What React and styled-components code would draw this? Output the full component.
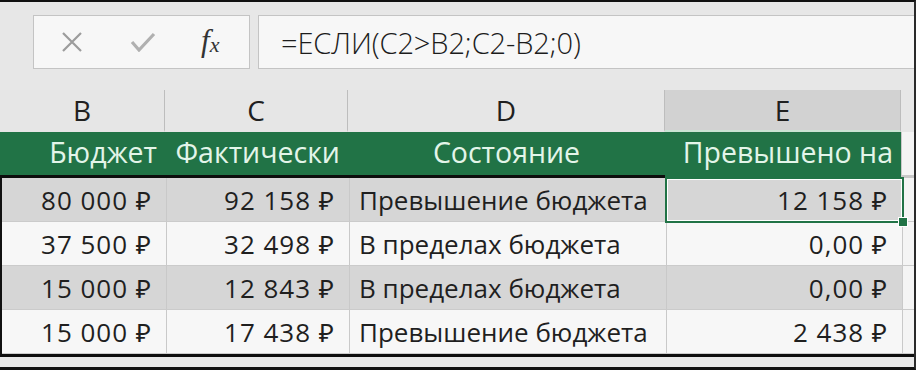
import React from "react";
import styled, { createGlobalStyle } from "styled-components";

const GlobalStyle = createGlobalStyle`
  html, body {
    margin: 0;
    padding: 0;
    background: #e7e7e7;
  }
  body {
    font-family: "Open Sans", "Noto Sans", sans-serif;
  }
`;

const columns = "165px 183px 317px 236px 1fr";

const rows = [
  { budget: "80 000 ₽", fact: "92 158 ₽", state: "Превышение бюджета", over: "12 158 ₽", shaded: true, selected: true },
  { budget: "37 500 ₽", fact: "32 498 ₽", state: "В пределах бюджета", over: "0,00 ₽" },
  { budget: "15 000 ₽", fact: "12 843 ₽", state: "В пределах бюджета", over: "0,00 ₽", shaded: true },
  { budget: "15 000 ₽", fact: "17 438 ₽", state: "Превышение бюджета", over: "2 438 ₽" },
];

const App = () => {
  return (
    <>
      <GlobalStyle />
      <Frame>
        <FormulaBar>
          <ActionBox>
            <IconSlot $left={27}>
              <svg width="22" height="20" viewBox="0 0 22 20">
                <path d="M2 1 L20 19 M20 1 L2 19" stroke="#9c9c9c" strokeWidth="2.2" fill="none" />
              </svg>
            </IconSlot>
            <IconSlot $left={47}>
              <svg width="26" height="20" viewBox="0 0 26 20">
                <path d="M2 10 L9 18 L24 2" stroke="#b0b0b0" strokeWidth="3.2" fill="none" />
              </svg>
            </IconSlot>
            <FxLabel>
              f<sub>x</sub>
            </FxLabel>
          </ActionBox>
          <FormulaInput>=ЕСЛИ(C2&gt;B2;C2-B2;0)</FormulaInput>
        </FormulaBar>

        <Sheet>
          <HeaderRow>
            <ColLetter>B</ColLetter>
            <ColLetter>C</ColLetter>
            <ColLetter>D</ColLetter>
            <ColLetter $active>E</ColLetter>
            <ColLetter $edge />
          </HeaderRow>

          <TitleRow>
            <TitleCell $align="right">Бюджет</TitleCell>
            <TitleCell $align="right">Фактически</TitleCell>
            <TitleCell $align="center">Состояние</TitleCell>
            <TitleCell $align="right" $open>
              Превышено на
            </TitleCell>
            <TitleCell $edge />
          </TitleRow>

          {rows.map((r, i) => (
            <DataRow key={i} $shaded={r.shaded} $last={i === rows.length - 1}>
              <Cell $align="right">{r.budget}</Cell>
              <Cell $align="right">{r.fact}</Cell>
              <Cell $align="left">{r.state}</Cell>
              <Cell $align="right" $selected={r.selected}>
                {r.over}
                {r.selected && (
                  <>
                    <Selection />
                    <Handle />
                  </>
                )}
              </Cell>
              <Cell $edge />
            </DataRow>
          ))}

          <TailRow>
            <TailCell />
            <TailCell />
            <TailCell />
            <TailCell />
            <TailCell $edge />
          </TailRow>
        </Sheet>
      </Frame>
    </>
  );
};

const Frame = styled.div`
  width: 916px;
  height: 370px;
  box-sizing: border-box;
  border-top: 2px solid #111;
  border-right: 2px solid #2a2a2a;
  border-bottom: 3px solid #111;
  background: #e7e7e7;
  overflow: hidden;
  display: flex;
  flex-direction: column;
`;

const FormulaBar = styled.div`
  display: flex;
  gap: 8px;
  padding: 13px 0 0 33px;
  height: 54px;
  margin-bottom: 21px;
`;

const ActionBox = styled.div`
  width: 217px;
  box-sizing: border-box;
  border: 1px solid #c4c4c4;
  background: #f7f7f7;
  display: flex;
  align-items: center;
`;

const IconSlot = styled.span`
  display: flex;
  margin-left: ${(p) => p.$left}px;
`;

const FxLabel = styled.span`
  margin-left: 45px;
  font-family: "Liberation Serif", "DejaVu Serif", serif;
  font-style: italic;
  font-size: 31px;
  color: #333333;
  line-height: 1;
  margin-top: -4px;
  sub {
    font-size: 22px;
    vertical-align: -1px;
    margin-left: 0;
  }
`;

const FormulaInput = styled.div`
  flex: 1;
  box-sizing: border-box;
  border: 1px solid #c4c4c4;
  border-right: none;
  background: #f7f7f7;
  display: flex;
  align-items: center;
  padding-left: 22px;
  font-size: 29px;
  font-weight: 300;
  letter-spacing: -0.1px;
  color: #1c1c1c;
`;

const Sheet = styled.div`
  display: flex;
  flex-direction: column;
`;

const GridRow = styled.div`
  display: grid;
  grid-template-columns: ${columns};
`;

const HeaderRow = styled(GridRow)`
  height: 42px;
`;

const ColLetter = styled.div`
  display: flex;
  align-items: center;
  justify-content: center;
  font-size: 28px;
  color: #202020;
  background: ${(p) => (p.$active ? "#d2d2d2" : p.$edge ? "#e7e7e7" : "#e6e6e6")};
  border-right: 1px solid ${(p) => (p.$edge ? "transparent" : "#bdbdbd")};
  border-bottom: 2px solid ${(p) => (p.$active ? "#c9e4d3" : "#e6e6e6")};
  box-sizing: border-box;
`;

const TitleRow = styled(GridRow)`
  height: 46px;
`;

const TitleCell = styled.div`
  display: flex;
  align-items: center;
  justify-content: ${(p) =>
    p.$align === "right" ? "flex-end" : p.$align === "center" ? "center" : "flex-start"};
  padding: 0 8px 3px;
  box-sizing: border-box;
  background: ${(p) => (p.$edge ? "#f4f4f4" : "#217346")};
  border-bottom: 3px solid ${(p) => (p.$edge ? "#c8c8c8" : p.$open ? "#217346" : "#0d0d0d")};
  border-left: ${(p) => (p.$edge ? "1px solid #c8c8c8" : "none")};
  color: #e3f5e9;
  font-size: 28.5px;
  white-space: nowrap;
`;

const DataRow = styled(GridRow)`
  height: 44px;
  background: ${(p) => (p.$shaded ? "#d6d6d6" : "#f7f7f7")};
  border-left: 2px solid #111;
  border-bottom: ${(p) => (p.$last ? "3px solid #0d0d0d" : "none")};
`;

const Cell = styled.div`
  position: relative;
  display: flex;
  align-items: center;
  justify-content: ${(p) => (p.$align === "right" ? "flex-end" : "flex-start")};
  padding: ${(p) => (p.$align === "right" ? "0 14px 0 0" : "0 0 0 9px")};
  box-sizing: border-box;
  border-right: 1px solid #c9c9c9;
  border-bottom: 1px solid #cbcbcb;
  font-size: 26px;
  letter-spacing: ${(p) => (p.$align === "right" ? "1px" : "0")};
  color: #1f1f1f;
  white-space: nowrap;
  z-index: ${(p) => (p.$selected ? 3 : "auto")};
  ${(p) => p.$edge && "background: #f4f4f4; border-right: none;"}
`;

const Selection = styled.div`
  position: absolute;
  inset: -1px -2px -2px -2px;
  border: 2px solid #217346;
  box-shadow: inset 0 0 0 1px #ffffff;
  pointer-events: none;
`;

const Handle = styled.div`
  position: absolute;
  right: -6px;
  bottom: -6px;
  width: 8px;
  height: 8px;
  background: #217346;
  border: 1px solid #ffffff;
  z-index: 2;
`;

const TailRow = styled(GridRow)`
  flex: 1;
  background: #f9f9f9;
  border-left: 2px solid #111;
`;

const TailCell = styled.div`
  border-right: 1px solid ${(p) => (p.$edge ? "transparent" : "#c9c9c9")};
`;

export default App;
